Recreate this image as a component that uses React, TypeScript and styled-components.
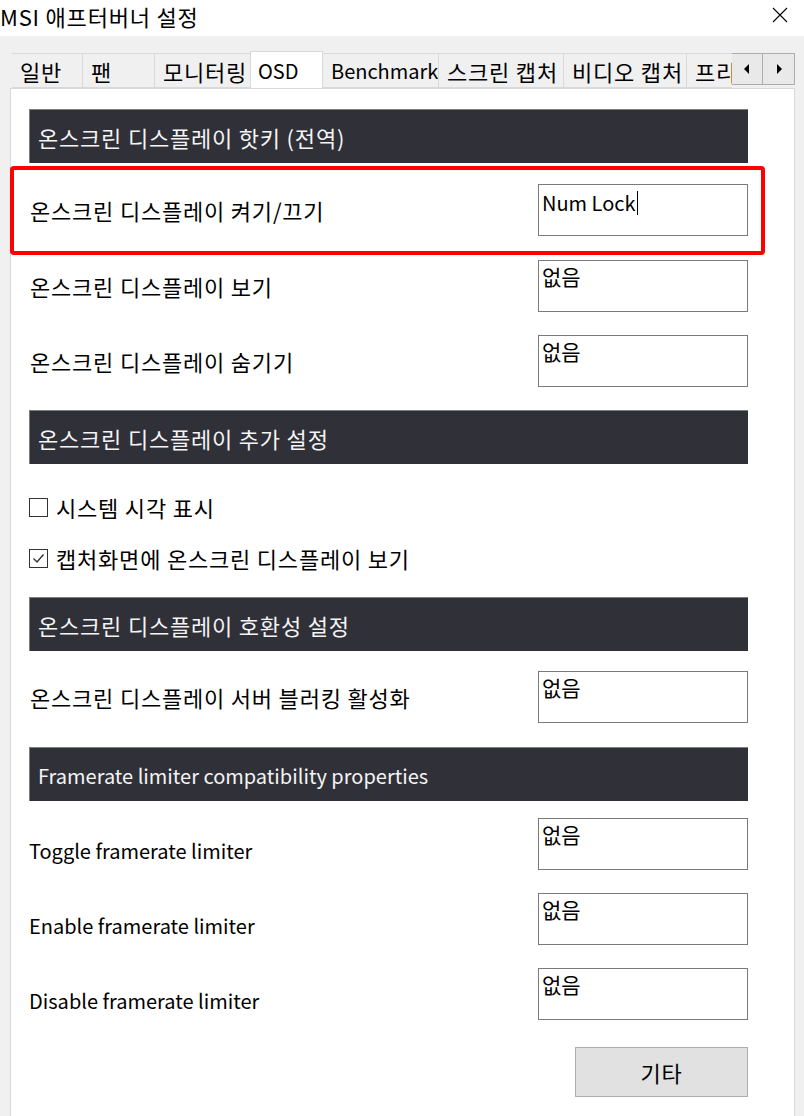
import React from "react";
import styled, { createGlobalStyle, css } from "styled-components";

const Global = createGlobalStyle`
  html, body { margin: 0; padding: 0; background: #f0f0f0; }
  body { font-family: "Noto Sans CJK KR", "Noto Sans", sans-serif; color: #000; }
  * { box-sizing: border-box; }
`;

const ko = css`
  font-size: 22px;
  letter-spacing: 0.8px;
`;

const en = css`
  font-size: 20px;
  letter-spacing: 0;
`;

const Window = styled.div`
  width: 804px;
  height: 1116px;
  background: #f0f0f0;
  display: flex;
  flex-direction: column;
  overflow: hidden;
  font-family: "Noto Sans CJK KR", "Noto Sans", sans-serif;
`;

const TitleBar = styled.div`
  height: 36px;
  background: #ffffff;
  display: flex;
  align-items: center;
  justify-content: space-between;
  padding: 0 16px 0 0;
  flex-shrink: 0;
`;

const Title = styled.div`
  ${ko}
  line-height: 36px;
  margin-top: -5px;
  color: #000;
`;

const CloseIcon = styled.svg`
  width: 16px;
  height: 16px;
  margin-top: -6px;
`;

const TabStrip = styled.div`
  margin-top: 15px;
  height: 37px;
  display: flex;
  align-items: flex-end;
  padding-left: 12px;
  flex-shrink: 0;
  position: relative;
  z-index: 2;
`;

const TabList = styled.div`
  width: 720px;
  height: 37px;
  display: flex;
  align-items: flex-end;
  overflow: hidden;
`;

const Tab = styled.div<{ $w: number; $active?: boolean; $latin?: boolean }>`
  flex: 0 0 ${(p) => p.$w}px;
  height: ${(p) => (p.$active ? 38 : 35)}px;
  margin-bottom: ${(p) => (p.$active ? -1 : 0)}px;
  margin-left: -1px;
  background: ${(p) => (p.$active ? "#ffffff" : "#f0f0f0")};
  border: 1px solid #d9d9d9;
  border-bottom: ${(p) => (p.$active ? "none" : "1px solid #d9d9d9")};
  padding-left: ${(p) => (p.$active ? 7 : 8)}px;
  ${(p) => (p.$latin ? en : ko)}
  line-height: ${(p) => (p.$active ? 38 : 34)}px;
  white-space: nowrap;
  overflow: hidden;
  position: relative;
  z-index: ${(p) => (p.$active ? 2 : 1)};
`;

const ArrowGroup = styled.div`
  display: flex;
  align-self: flex-start;
  margin-top: 2px;
  margin-left: -1px;
`;

const ArrowButton = styled.div`
  width: 33px;
  height: 32px;
  margin-left: -1px;
  border: 1px solid #adadad;
  background: #e9e9e9;
  display: flex;
  align-items: center;
  justify-content: center;
`;

const Panel = styled.div`
  flex: 1;
  margin: 0 9px 0 10px;
  background: #ffffff;
  border: 1px solid #d9d9d9;
  border-bottom: none;
  padding: 20px 46px 0 18px;
  display: flex;
  flex-direction: column;
  position: relative;
  z-index: 1;
`;

const SectionHeader = styled.div<{ $mt: number; $latin?: boolean }>`
  height: 54px;
  margin-top: ${(p) => p.$mt}px;
  background: #303038;
  border-top: 1px solid #7d7d7d;
  border-left: 1px solid #7d7d7d;
  color: #f4f4f4;
  ${(p) => (p.$latin ? en : ko)}
  display: flex;
  align-items: center;
  padding: ${(p) => (p.$latin ? 2 : 0)}px 0 0 8px;
  flex-shrink: 0;
`;

const Row = styled.div<{ $mt: number }>`
  height: 52px;
  margin-top: ${(p) => p.$mt}px;
  display: flex;
  align-items: center;
  position: relative;
  flex-shrink: 0;
`;

const Label = styled.div<{ $latin?: boolean }>`
  flex: 1;
  ${(p) => (p.$latin ? en : ko)}
  padding-left: ${(p) => (p.$latin ? 0 : 1)}px;
  padding-top: ${(p) => (p.$latin ? 12 : 0)}px;
  white-space: nowrap;
`;

const KeyField = styled.div<{ $latin?: boolean }>`
  width: 210px;
  height: 52px;
  border: 1px solid #7a7a7a;
  background: #ffffff;
  padding: 0 0 0 3px;
  font-size: ${(p) => (p.$latin ? 20 : 21)}px;
  line-height: ${(p) => (p.$latin ? 36 : 31)}px;
  display: flex;
  align-items: flex-start;
`;

const Caret = styled.span`
  display: inline-block;
  width: 1px;
  height: 24px;
  background: #000;
  margin-top: 6px;
  margin-left: 1px;
`;

const Highlight = styled.div`
  position: absolute;
  left: -19px;
  top: -18px;
  width: 755px;
  height: 89px;
  border: 4px solid #ff0000;
  border-radius: 4px;
  pointer-events: none;
`;

const CheckRow = styled.div<{ $mt: number }>`
  height: 19px;
  margin-top: ${(p) => p.$mt}px;
  display: flex;
  align-items: center;
  gap: 8px;
  flex-shrink: 0;
`;

const Box = styled.div`
  width: 19px;
  height: 19px;
  border: 1px solid #333333;
  background: #ffffff;
  display: flex;
  align-items: center;
  justify-content: center;
  flex-shrink: 0;
`;

const CheckText = styled.span`
  ${ko}
  white-space: nowrap;
  margin-top: -2px;
`;

const ButtonRow = styled.div<{ $mt: number }>`
  margin-top: ${(p) => p.$mt}px;
  display: flex;
  justify-content: flex-end;
`;

const Button = styled.div`
  width: 173px;
  height: 50px;
  background: #e1e1e1;
  border: 1px solid #adadad;
  ${ko}
  display: flex;
  align-items: center;
  justify-content: center;
`;

const tabs: { label: string; w: number; active?: boolean; latin?: boolean }[] = [
  { label: "일반", w: 72 },
  { label: "팬", w: 73 },
  { label: "모니터링", w: 97 },
  { label: "OSD", w: 73, active: true, latin: true },
  { label: "Benchmark", w: 117, latin: true },
  { label: "스크린 캡처", w: 126 },
  { label: "비디오 캡처", w: 124 },
  { label: "프리셋", w: 80 },
];

const Tri = ({ dir }: { dir: "l" | "r" }) => (
  <svg width="8" height="12" viewBox="0 0 8 12">
    {dir === "l" ? <polygon points="6,1 6,11 1,6" fill="#000" /> : <polygon points="2,1 2,11 7,6" fill="#000" />}
  </svg>
);

export default function App() {
  return (
    <>
      <Global />
      <Window>
        <TitleBar>
          <Title>MSI 애프터버너 설정</Title>
          <CloseIcon viewBox="0 0 16 16">
            <path d="M1 1 L15 15 M15 1 L1 15" stroke="#000" strokeWidth="1.1" fill="none" />
          </CloseIcon>
        </TitleBar>
        <TabStrip>
          <TabList>
            {tabs.map((t) => (
              <Tab key={t.label} $w={t.w} $active={t.active} $latin={t.latin}>
                {t.label}
              </Tab>
            ))}
          </TabList>
          <ArrowGroup>
            <ArrowButton>
              <Tri dir="l" />
            </ArrowButton>
            <ArrowButton>
              <Tri dir="r" />
            </ArrowButton>
          </ArrowGroup>
        </TabStrip>
        <Panel>
          <SectionHeader $mt={0}>온스크린 디스플레이 핫키 (전역)</SectionHeader>
          <Row $mt={21}>
            <Highlight />
            <Label>온스크린 디스플레이 켜기/끄기</Label>
            <KeyField $latin>
              Num Lock
              <Caret />
            </KeyField>
          </Row>
          <Row $mt={24}>
            <Label>온스크린 디스플레이 보기</Label>
            <KeyField>없음</KeyField>
          </Row>
          <Row $mt={23}>
            <Label>온스크린 디스플레이 숨기기</Label>
            <KeyField>없음</KeyField>
          </Row>
          <SectionHeader $mt={23}>온스크린 디스플레이 추가 설정</SectionHeader>
          <CheckRow $mt={34}>
            <Box />
            <CheckText>시스템 시각 표시</CheckText>
          </CheckRow>
          <CheckRow $mt={32}>
            <Box>
              <svg width="15" height="15" viewBox="0 0 15 15">
                <polyline points="2.5,7.5 6,11 12.5,3.5" fill="none" stroke="#333" strokeWidth="1.4" />
              </svg>
            </Box>
            <CheckText>캡처화면에 온스크린 디스플레이 보기</CheckText>
          </CheckRow>
          <SectionHeader $mt={29}>온스크린 디스플레이 호환성 설정</SectionHeader>
          <Row $mt={20}>
            <Label>온스크린 디스플레이 서버 블러킹 활성화</Label>
            <KeyField>없음</KeyField>
          </Row>
          <SectionHeader $mt={24} $latin>
            Framerate limiter compatibility properties
          </SectionHeader>
          <Row $mt={17}>
            <Label $latin>Toggle framerate limiter</Label>
            <KeyField>없음</KeyField>
          </Row>
          <Row $mt={23}>
            <Label $latin>Enable framerate limiter</Label>
            <KeyField>없음</KeyField>
          </Row>
          <Row $mt={23}>
            <Label $latin>Disable framerate limiter</Label>
            <KeyField>없음</KeyField>
          </Row>
          <ButtonRow $mt={27}>
            <Button>기타</Button>
          </ButtonRow>
        </Panel>
      </Window>
    </>
  );
}
